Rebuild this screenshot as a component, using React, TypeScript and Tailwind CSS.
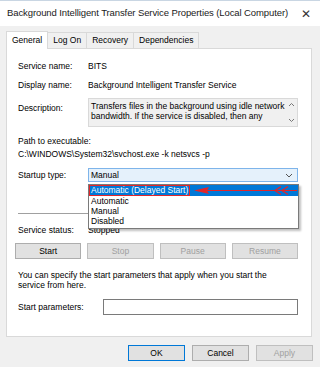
import React from 'react';

function Btn({ label, disabled, primary, className = '' }: { label: string; disabled?: boolean; primary?: boolean; className?: string }) {
  return (
    <div
      className={
        'h-[16px] flex items-center justify-center border ' +
        (primary ? 'border-[#0078d7] bg-[#e1e1e1] ' : 'border-[#adadad] bg-[#e1e1e1] ') +
        (disabled ? 'text-[#a0a0a0] bg-[#cccccc] border-[#bfbfbf] ' : 'text-black ') +
        className
      }
    >
      {label}
    </div>
  );
}

export default function App() {
  const tabs = ['Log On', 'Recovery', 'Dependencies'];

  return (
    <div className="w-[320px] h-[367px] bg-[#f0f0f0] font-['Liberation_Sans',Arial,sans-serif] text-[8.5px] text-black overflow-hidden relative">
      {/* title bar */}
      <div className="h-[26px] bg-white border-t border-[#c9d6e3] flex items-center justify-between pl-[7px] pr-[9px]">
        <span className="text-[9.5px] text-[#1a1a1a] tracking-[-0.1px]">
          Background Intelligent Transfer Service Properties (Local Computer)
        </span>
        <span className="text-[12px] text-[#333] font-light leading-none">✕</span>
      </div>

      {/* tabs */}
      <div className="flex items-end pl-[6px] h-[22px]">
        <div className="h-[18px] bg-white border border-b-0 border-[#d9d9d9] px-[5px] flex items-center relative z-10 -mb-px">
          General
        </div>
        {tabs.map((t) => (
          <div key={t} className="h-[16px] border border-l-0 border-b-0 border-[#d9d9d9] bg-[#f0f0f0] px-[5px] flex items-center">
            {t}
          </div>
        ))}
      </div>

      {/* panel */}
      <div className="ml-[6px] w-[306px] h-[289px] bg-white border border-[#d9d9d9] pl-[11px] pr-[13px] relative">
        <div className="flex mt-[12px] leading-[10px]">
          <div className="w-[70px]">Service name:</div>
          <div>BITS</div>
        </div>
        <div className="flex mt-[9px] leading-[10px]">
          <div className="w-[70px]">Display name:</div>
          <div>Background Intelligent Transfer Service</div>
        </div>
        <div className="flex mt-[8px]">
          <div className="w-[70px] pt-[5px] leading-[10px]">Description:</div>
          <div className="flex-1 h-[29px] bg-[#f0f0f0] border border-[#d9d9d9] flex">
            <div className="flex-1 pl-[2px] pt-[3px] leading-[9.5px]">
              Transfers files in the background using idle network bandwidth. If the service is disabled, then any
            </div>
            <div className="w-[12px] flex flex-col items-center justify-between py-[3px] text-[#777]">
              <svg width="7" height="5" viewBox="0 0 7 5"><path d="M1 4 L3.5 1.5 L6 4" stroke="#777" fill="none" strokeWidth="1" /></svg>
              <svg width="7" height="5" viewBox="0 0 7 5"><path d="M1 1 L3.5 3.5 L6 1" stroke="#777" fill="none" strokeWidth="1" /></svg>
            </div>
          </div>
        </div>
        <div className="mt-[8px] leading-[13px]">
          <div>Path to executable:</div>
          <div>C:\WINDOWS\System32\svchost.exe -k netsvcs -p</div>
        </div>
        <div className="flex mt-[7px] items-center">
          <div className="w-[70px] leading-[10px]">Startup type:</div>
          <div className="flex-1 h-[14px] bg-[#e5f1fb] border border-[#7eb4ea] flex items-center justify-between pl-[2px] pr-[4px]">
            <span>Manual</span>
            <svg width="8" height="5" viewBox="0 0 8 5"><path d="M1 1 L4 4 L7 1" stroke="#555" fill="none" strokeWidth="1" /></svg>
          </div>
        </div>
        <div className="mt-[31px] h-px bg-[#a0a0a0]" />
        <div className="flex mt-[11px] leading-[10px]">
          <div className="w-[70px]">Service status:</div>
          <div>Stopped</div>
        </div>
        <div className="grid grid-cols-4 gap-[6px] mt-[8px] -ml-[3px]">
          <Btn label="Start" />
          <Btn label="Stop" disabled />
          <Btn label="Pause" disabled />
          <Btn label="Resume" disabled />
        </div>
        <div className="mt-[12px] leading-[9.5px] pr-[20px]">
          You can specify the start parameters that apply when you start the service from here.
        </div>
        <div className="flex mt-[9px] items-center">
          <div className="w-[85px] leading-[10px]">Start parameters:</div>
          <div className="flex-1 h-[16px] border border-[#7a7a7a] bg-white" />
        </div>

        {/* open dropdown list */}
        <div className="absolute left-[81px] top-[135px] w-[211px] bg-white border border-[#7a7a7a] shadow-[2px_2px_2px_rgba(0,0,0,0.25)] pb-[2px]">
          <div className="h-[11px] bg-[#0078d7] text-white flex items-center pl-[2px] relative">
            <span className="border-[1.5px] border-[#e2262a] px-[1px] -ml-[2px] leading-[9px]">Automatic (Delayed Start)</span>
            <svg className="absolute left-[104px] top-[0px]" width="106" height="11" viewBox="0 0 106 11">
              <path d="M6 5.5 L104 5.5" stroke="#e2262a" strokeWidth="1" />
              <path d="M1 5.5 L16 2 L14 5.5 L16 9 Z" fill="#e2262a" />
              <path d="M88 1.5 L82 5.5 L88 9.5 M95 1.5 L89 5.5 L95 9.5" stroke="#e2262a" strokeWidth="1.3" fill="none" />
            </svg>
          </div>
          <div className="h-[10px] flex items-center pl-[2px]">Automatic</div>
          <div className="h-[10px] flex items-center pl-[2px]">Manual</div>
          <div className="h-[10px] flex items-center pl-[2px]">Disabled</div>
        </div>
      </div>

      {/* bottom buttons */}
      <div className="flex justify-end gap-[7px] pr-[7px] mt-[8px]">
        <Btn label="OK" primary className="w-[57px]" />
        <Btn label="Cancel" className="w-[57px]" />
        <Btn label="Apply" disabled className="w-[57px]" />
      </div>
    </div>
  );
}
